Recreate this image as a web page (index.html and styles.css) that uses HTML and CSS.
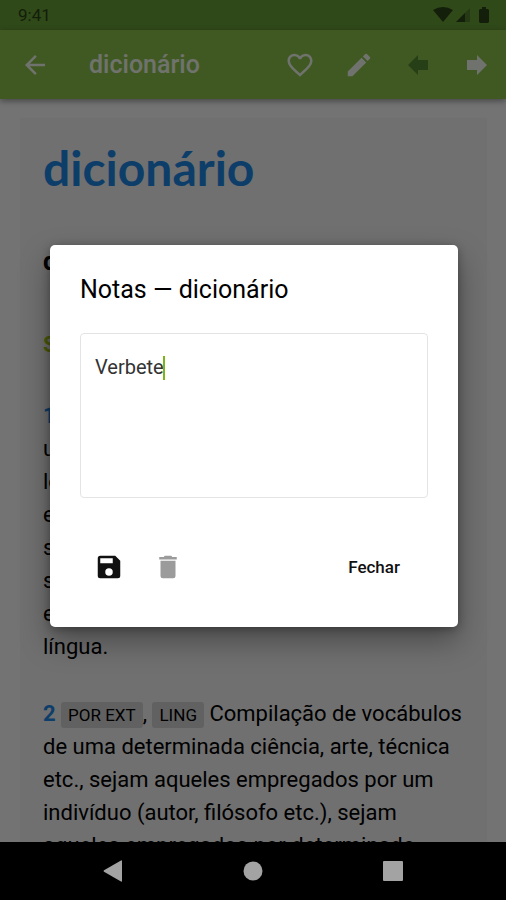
FILE: index.html
```html
<!DOCTYPE html>
<html lang="pt-BR">
<head>
<meta charset="utf-8">
<meta name="viewport" content="width=device-width, initial-scale=1">
<title>dicionário</title>
<link rel="stylesheet" href="styles.css">
</head>
<body>
<div class="screen">
  <div class="status">
    <span>9:41</span>
    <div class="status-icons">
      <svg width="20" height="16" viewBox="0 0 20 16"><path d="M0 3Q10-3 20 3L10 15Z"/></svg>
      <svg width="14" height="16" viewBox="0 0 14 16"><path d="M14 1v14H0z" opacity=".35"/><path d="M9 6v9H0z"/></svg>
      <svg class="battery" width="10" height="16" viewBox="0 0 10 16"><path d="M3 0h4v2h2l1 1v12l-1 1H1l-1-1V3l1-1h2z"/></svg>
    </div>
  </div>
  <header class="appbar">
    <button class="icon-btn" type="button" aria-label="Voltar"><svg viewBox="0 0 24 24"><path d="M20 11H7.83l5.59-5.59L12 4l-8 8 8 8 1.41-1.41L7.83 13H20z"/></svg></button>
    <div class="appbar-title">dicionário</div>
    <div class="actions">
      <button class="icon-btn" type="button" aria-label="Favorito"><svg viewBox="0 0 24 24"><path d="M16.5 3c-1.74 0-3.41.81-4.5 2.09C10.91 3.81 9.24 3 7.5 3 4.42 3 2 5.42 2 8.5c0 3.78 3.4 6.86 8.55 11.54L12 21.35l1.45-1.32C18.6 15.36 22 12.28 22 8.5 22 5.42 19.58 3 16.5 3zm-4.4 15.55-.1.1-.1-.1C7.14 14.24 4 11.39 4 8.5 4 6.5 5.5 5 7.5 5c1.54 0 3.04.99 3.57 2.36h1.87C13.46 5.99 14.96 5 16.5 5c2 0 3.5 1.5 3.5 3.5 0 2.89-3.14 5.74-7.9 10.05z"/></svg></button>
      <button class="icon-btn" type="button" aria-label="Notas"><svg viewBox="0 0 24 24"><path d="M3 17.25V21h3.75L17.81 9.94l-3.75-3.75zM20.71 7.04a1 1 0 0 0 0-1.41l-2.34-2.34a1 1 0 0 0-1.41 0l-1.83 1.83 3.75 3.75z"/></svg></button>
      <button class="icon-btn off" type="button" aria-label="Anterior"><svg viewBox="0 0 24 24"><path d="M12 8V4l-8 8 8 8v-4h8V8z"/></svg></button>
      <button class="icon-btn" type="button" aria-label="Próximo"><svg viewBox="0 0 24 24"><path d="M12 8V4l8 8-8 8v-4H4V8z"/></svg></button>
    </div>
  </header>
  <main class="content">
    <article class="entry">
      <h1>dicionário</h1>
      <h2>di·ci·o·ná·ri:o</h2>
      <p class="class">SUBSTANTIVO MASCULINO</p>
      <p><b>1</b> Coleção de vocábulos de<br>uma língua, de termos ou<br>locuções, dispostos<br>em ordem alfabética, com<br>seus significados,<br>sinônimos ou<br>equivalentes em outra<br>língua.</p>
      <p><b>2</b> <span class="tag">POR EXT</span>, <span class="tag">LING</span> Compilação de vocábulos de uma determinada ciência, arte, técnica etc., sejam aqueles empregados por um indivíduo (autor, filósofo etc.), sejam aqueles empregados por determinado</p>
    </article>
  </main>
  <div class="scrim">
    <form class="dialog" role="dialog" aria-labelledby="note-title">
      <label class="dialog-title" id="note-title" for="note">Notas — dicionário</label>
      <div class="field">
        <textarea id="note" spellcheck="false">Verbete</textarea>
        <span class="caret"></span>
      </div>
      <div class="dialog-actions">
        <button class="icon-btn" type="button" aria-label="Salvar"><svg viewBox="0 0 24 24"><path d="M17 3H5a2 2 0 0 0-2 2v14a2 2 0 0 0 2 2h14a2 2 0 0 0 2-2V7zm-5 16a3 3 0 1 1 0-6 3 3 0 0 1 0 6zm3-10H5V5h10z"/></svg></button>
        <button class="icon-btn dim" type="button" aria-label="Excluir"><svg viewBox="0 0 24 24"><path d="M6 19a2 2 0 0 0 2 2h8a2 2 0 0 0 2-2V7H6zM19 4h-3.5l-1-1h-5l-1 1H5v2h14z"/></svg></button>
        <button class="close" type="button">Fechar</button>
      </div>
    </form>
  </div>
</div>
<nav class="navbar">
  <button type="button" aria-label="Voltar"><svg viewBox="0 0 24 24"><path d="M21 2v20q0 1-1 .5L3 12.800q-1-.8 0-1.600L20 1.500q1-.5 1 .5z"/></svg></button>
  <button type="button" aria-label="Início"><svg viewBox="0 0 24 24"><circle cx="12" cy="12" r="9.500"/></svg></button>
  <button type="button" aria-label="Recentes"><svg viewBox="0 0 24 24"><rect x="2" y="2" width="20" height="20" rx="1"/></svg></button>
</nav>
</body>
</html>
```

FILE: styles.css
```css
* { box-sizing: border-box; }

body {
  margin: 0;
  height: 100vh;
  display: flex;
  flex-direction: column;
  overflow: hidden;
  background: #000;
  color: #000;
  font-family: Roboto, "Liberation Sans", sans-serif;
}

button {
  border: 0;
  padding: 0;
  background: none;
  color: inherit;
  font: inherit;
}

svg { display: block; fill: currentColor; }

.screen {
  position: relative;
  flex: 1;
  min-height: 0;
  display: flex;
  flex-direction: column;
  background: #fafafa;
}

.status {
  flex: none;
  height: 30px;
  padding: 0 17px 0 18px;
  display: flex;
  align-items: center;
  justify-content: space-between;
  background: #689f38;
  color: #2b4416;
  font-size: 17px;
}

.status-icons { display: flex; gap: 3px; }
.battery { margin-left: 6px; }

.appbar {
  flex: none;
  height: 69px;
  padding: 0 14px 0 20px;
  display: flex;
  align-items: center;
  background: #8bc34a;
  color: #fff;
  box-shadow: 0 2px 6px rgba(0, 0, 0, .4);
  z-index: 1;
}

.icon-btn svg { width: 30px; height: 30px; }
.appbar-title { margin-left: 39px; font-size: 25px; font-weight: 500; opacity: .9; }
.appbar .icon-btn { opacity: .9; }
.actions { margin-left: auto; display: flex; gap: 29px; }
.appbar .off { color: #4d8430; }

.content { flex: 1; min-height: 0; overflow: hidden; padding: 19px 19px 0 20px; }

.entry {
  min-height: 100%;
  padding: 23px;
  background: #f3f3f3;
  font-size: 22px;
  line-height: 33px;
}

.entry h1 {
  margin: 0 0 50px;
  font-family: Lato, sans-serif;
  font-size: 48px;
  line-height: 54px;
  font-weight: 700;
  color: #1e88e5;
}

.entry h2 { margin: 0 0 50px; font-size: 26px; line-height: 33px; }
.entry p { margin: 0 0 34px; }
.entry .class { margin-bottom: 38px; font-weight: 700; color: #a4c614; }
.entry b { color: #1e88e5; }

.tag {
  padding: 3px 7px;
  border-radius: 3px;
  background: #d3d3d3;
  font-size: 17px;
  line-height: 20px;
}

.scrim {
  position: absolute;
  inset: 0;
  z-index: 2;
  padding: 30px 48px 0 50px;
  display: flex;
  align-items: center;
  background: rgba(0, 0, 0, .54);
}

.dialog {
  width: 100%;
  padding: 30px 30px 38px;
  border-radius: 5px;
  background: #fff;
  box-shadow: 0 14px 30px rgba(0, 0, 0, .35), 0 2px 8px rgba(0, 0, 0, .3);
}

.dialog-title { display: block; font-size: 25px; line-height: 30px; font-weight: 400; }

.field { position: relative; margin-top: 28px; }

textarea {
  display: block;
  width: 100%;
  height: 165px;
  padding: 18px 14px;
  border: 1px solid #e4e4e4;
  border-radius: 4px;
  outline: 0;
  resize: none;
  background: transparent;
  color: #333;
  font: 20px/30px Roboto, "Liberation Sans", sans-serif;
}

.caret {
  position: absolute;
  top: 23px;
  left: 83px;
  width: 2px;
  height: 24px;
  background: #7cb518;
}

.dialog-actions {
  margin-top: 47px;
  padding: 0 28px 0 14px;
  display: flex;
  align-items: center;
  gap: 29px;
  height: 44px;
  color: #111;
}

.dim { color: #9b9b9b; }
.close { margin-left: auto; font-size: 17px; font-weight: 500; }

.navbar {
  flex: none;
  height: 58px;
  display: flex;
  align-items: center;
  justify-content: center;
  gap: 116px;
  color: #a3a3a3;
}

.navbar svg { width: 24px; height: 24px; }
```
